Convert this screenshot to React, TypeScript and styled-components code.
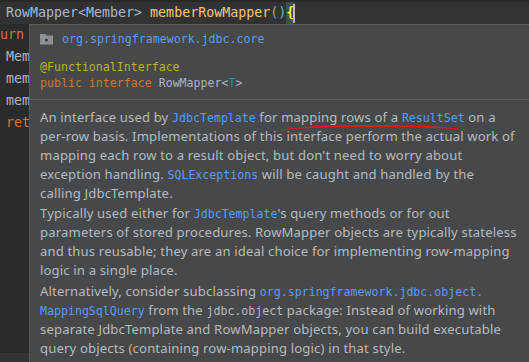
import styled, { createGlobalStyle } from 'styled-components'

const GlobalStyle = createGlobalStyle`
  html, body {
    margin: 0;
    padding: 0;
    background: #2b2b2b;
    overflow: hidden;
  }
`

const mono = `"DejaVu Sans Mono", "Liberation Mono", monospace`

const Screen = styled.div`
  position: relative;
  width: 529px;
  height: 362px;
  overflow: hidden;
  background: #2b2b2b;
  display: flex;
  flex-direction: column;
`

const Editor = styled.div`
  flex: 1;
  display: flex;
  flex-direction: column;
  overflow: hidden;
  font-family: ${mono};
  font-size: 13.3px;
  color: #a9b7c6;
`

const CodeLine = styled.div<{ current?: boolean; shift?: number }>`
  height: 22px;
  line-height: 22px;
  padding-left: 6px;
  text-indent: ${p => p.shift ?? 0}px;
  white-space: nowrap;
  background: ${p => (p.current ? '#323232' : 'transparent')};
  border-top: ${p => (p.current ? '2px solid #282828' : 'none')};
`

const Keyword = styled.span`
  color: #cc7832;
`
const Method = styled.span`
  color: #ffc66d;
`
const Paren = styled.span`
  color: #8fa9c9;
`
const Brace = styled.span`
  display: inline-block;
  height: 22px;
  background: #3b514d;
  color: #ffef28;
  font-weight: bold;
`
const Caret = styled.span`
  display: inline-block;
  width: 2px;
  height: 19px;
  vertical-align: middle;
  background: #bbbbbb;
  margin-left: -1px;
`

const StatusStrip = styled.div`
  height: 8px;
  border-top: 1px solid #353739;
  background: #313335;
`

const Popup = styled.div`
  position: absolute;
  left: 29px;
  top: 24px;
  right: -40px;
  bottom: -20px;
  background: #46484a;
  border-left: 1px solid #55585a;
  border-top: 1px solid #5a5d5f;
  color: #bbbbbb;
`

const Header = styled.div`
  display: flex;
  align-items: center;
  gap: 9px;
  padding: 6px 10px 0;
  height: 16px;
`

const PackageName = styled.span`
  font-family: ${mono};
  font-size: 11.6px;
  color: #589df6;
`

const Signature = styled.div`
  margin-top: 12px;
  padding: 0 10px 8px;
  border-bottom: 1px solid #5c5e60;
  font-family: ${mono};
  font-size: 11.6px;
  line-height: 16px;
  color: #a9b7c6;
`

const SigLine = styled.div`
  height: 16px;
  white-space: nowrap;
`

const Annotation = styled.span`
  color: #bbb529;
`
const TypeParam = styled.span`
  color: #20999d;
`

const Description = styled.div`
  padding: 8px 10px 0;
  font-family: "Noto Sans", "Noto Sans CJK KR", sans-serif;
  font-size: 13.1px;
  letter-spacing: 0.15px;
  color: #b9bbbd;
`

const Paragraph = styled.div<{ gap?: number }>`
  margin-top: ${p => p.gap ?? 0}px;
`

const Line = styled.div`
  height: 19px;
  line-height: 19px;
  white-space: nowrap;
`

const Link = styled.span`
  font-family: ${mono};
  font-size: 11.6px;
  letter-spacing: 0;
  color: #589df6;
`

const Code = styled.span`
  font-family: ${mono};
  font-size: 11.6px;
  letter-spacing: 0;
`

const Marked = styled.span`
  position: relative;

  &::after {
    content: '';
    position: absolute;
    left: -1px;
    right: -2px;
    bottom: -5px;
    height: 4px;
    border-top: 2px solid #e3191b;
    border-radius: 50% 50% 0 0 / 100% 100% 0 0;
  }
`

function FolderIcon() {
  return (
    <svg width="13" height="12" viewBox="0 0 13 12">
      <path d="M0 1 H5 L6.5 2.5 H13 V11.5 H0 Z" fill="#8c9196" />
      <circle cx="6.5" cy="7" r="1.6" fill="#3a3c3e" />
    </svg>
  )
}

export default function App() {
  return (
    <Screen>
      <GlobalStyle />
      <Editor>
        <CodeLine current>
          RowMapper&lt;Member&gt; <Method>memberRowMapper</Method>
          <Paren>()</Paren>
          <Brace>{'{'}</Brace>
          <Caret />
        </CodeLine>
        <CodeLine shift={-30}>
          <Keyword>return</Keyword> (rs, rowNum) -&gt; {'{'}
        </CodeLine>
        <CodeLine>Member member = new Member();</CodeLine>
        <CodeLine>member.setId(rs.getLong("id"));</CodeLine>
        <CodeLine>member.setName(rs.getString("name"));</CodeLine>
        <CodeLine>
          <Keyword>return</Keyword> member;
        </CodeLine>
      </Editor>
      <StatusStrip />

      <Popup>
        <Header>
          <FolderIcon />
          <PackageName>org.springframework.jdbc.core</PackageName>
        </Header>
        <Signature>
          <SigLine>
            <Annotation>@FunctionalInterface</Annotation>
          </SigLine>
          <SigLine>
            <Keyword>public interface</Keyword> RowMapper&lt;<TypeParam>T</TypeParam>&gt;
          </SigLine>
        </Signature>
        <Description>
          <Paragraph>
            <Line>
              An interface used by <Link>JdbcTemplate</Link> for{' '}
              <Marked>
                mapping rows of a <Link>ResultSet</Link>
              </Marked>{' '}
              on a
            </Line>
            <Line>per-row basis. Implementations of this interface perform the actual work of</Line>
            <Line>mapping each row to a result object, but don't need to worry about</Line>
            <Line>
              exception handling. <Link>SQLExceptions</Link> will be caught and handled by the
            </Line>
            <Line>calling JdbcTemplate.</Line>
          </Paragraph>
          <Paragraph gap={1}>
            <Line>
              Typically used either for <Link>JdbcTemplate</Link>'s query methods or for out
            </Line>
            <Line>parameters of stored procedures. RowMapper objects are typically stateless</Line>
            <Line>and thus reusable; they are an ideal choice for implementing row-mapping</Line>
            <Line>logic in a single place.</Line>
          </Paragraph>
          <Paragraph gap={2}>
            <Line>
              Alternatively, consider subclassing <Link>org.springframework.jdbc.object.</Link>
            </Line>
            <Line>
              <Link>MappingSqlQuery</Link> from the <Code>jdbc.object</Code> package: Instead of working with
            </Line>
            <Line>separate JdbcTemplate and RowMapper objects, you can build executable</Line>
            <Line>query objects (containing row-mapping logic) in that style.</Line>
          </Paragraph>
        </Description>
      </Popup>
    </Screen>
  )
}
